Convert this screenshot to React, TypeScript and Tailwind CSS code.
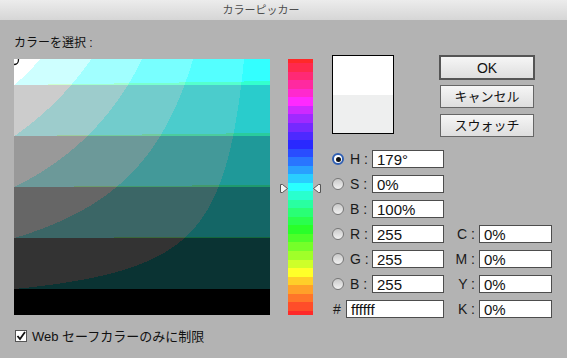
import React, { useMemo } from "react";

const q = (v: number) => Math.round(v / 51) * 51;
const adj = (r: number, g: number, b: number, k = 0.2) => {
  const m = Math.max(r, g, b);
  const f = (c: number) => Math.round(c + k * (m - c) * (1 - c / 255));
  return `rgb(${f(r)},${f(g)},${f(b)})`;
};

function hsv(h: number, s: number, v: number): [number, number, number] {
  const hh = (((h % 360) + 360) % 360) / 60;
  const i = Math.floor(hh);
  const f = hh - i;
  const p = v * (1 - s);
  const qq = v * (1 - s * f);
  const t = v * (1 - s * (1 - f));
  let r = 0, g = 0, b = 0;
  switch (i) {
    case 0: r = v; g = t; b = p; break;
    case 1: r = qq; g = v; b = p; break;
    case 2: r = p; g = v; b = t; break;
    case 3: r = p; g = qq; b = v; break;
    case 4: r = t; g = p; b = v; break;
    default: r = v; g = p; b = qq; break;
  }
  return [r * 255, g * 255, b * 255];
}

function ColorField() {
  const rects = useMemo(() => {
    const out: React.ReactElement[] = [];
    for (let y = 0; y < 256; y++) {
      const V = 1 - y / 255;
      let start = 0;
      let prev = "";
      for (let x = 0; x <= 256; x++) {
        let col = "";
        if (x < 256) {
          const S = x / 255;
          const [r, g, b] = hsv(179, S, V);
          col = adj(q(r), q(g), q(b));
        }
        if (col !== prev) {
          if (prev) out.push(<rect key={`${y}-${start}`} x={start} y={y} width={x - start} height={1} fill={prev} />);
          start = x;
          prev = col;
        }
      }
    }
    return out;
  }, []);
  return (
    <svg width="256" height="256" viewBox="0 0 256 256" shapeRendering="crispEdges" className="block">
      {rects}
      <circle cx="0" cy="1" r="4.5" fill="none" stroke="#111" strokeWidth="1.3" shapeRendering="auto" />
    </svg>
  );
}

function HueSlider() {
  const rects = useMemo(() => {
    const out: React.ReactElement[] = [];
    let start = 0;
    let prev = "";
    for (let y = 0; y <= 256; y++) {
      let col = "";
      if (y < 256) {
        const hue = 360 * (1 - (y + 0.5) / 256);
        const [r, g, b] = hsv(hue, 1, 1);
        col = adj(q(r), q(g), q(b), 0.16);
      }
      if (col !== prev) {
        if (prev) out.push(<rect key={start} x={0} y={start} width={25} height={y - start} fill={prev} />);
        start = y;
        prev = col;
      }
    }
    return out;
  }, []);
  return (
    <svg width="25" height="256" viewBox="0 0 25 256" shapeRendering="crispEdges" className="block">
      {rects}
    </svg>
  );
}

function Radio({ on }: { on?: boolean }) {
  if (on)
    return (
      <div className="w-[12px] h-[12px] rounded-full border-[2px] border-[#2f5fb3] bg-white flex items-center justify-center shrink-0">
        <div className="w-[5px] h-[5px] rounded-full bg-[#111]" />
      </div>
    );
  return <div className="w-[12px] h-[12px] rounded-full border border-[#777] bg-gradient-to-b from-[#c9c9c9] to-[#f2f2f2] shrink-0" />;
}

function Field({ value, w = "w-[72px]" }: { value: string; w?: string }) {
  return (
    <div className={`${w} h-[18px] bg-white border border-[#4d4d4d] pl-[4px] flex items-center text-[15px] leading-none text-[#111]`}>
      {value}
    </div>
  );
}

function LeftRow({ label, value, on }: { label: string; value: string; on?: boolean }) {
  return (
    <div className="flex items-center h-[18px]">
      <Radio on={on} />
      <div className="w-[28px] pl-[6px] text-[14px] leading-none text-[#1a1a1a]">{label} :</div>
      <Field value={value} />
    </div>
  );
}

function Row({ label, value, on, right }: { label: string; value: string; on?: boolean; right?: [string, string] }) {
  return (
    <div className="flex items-center h-[18px]">
      <LeftRow label={label} value={value} on={on} />
      {right && (
        <>
          <div className="w-[35px] pr-[4px] text-right text-[14px] leading-none text-[#1a1a1a]">{right[0]} :</div>
          <Field value={right[1]} w="w-[73px]" />
        </>
      )}
    </div>
  );
}

function Button({ children }: { children: React.ReactNode }) {
  return (
    <div className="w-[94px] h-[23px] border border-[#666] bg-gradient-to-b from-[#f6f6f6] to-[#dedede] flex items-center justify-center text-[13px] text-[#111] leading-none">
      {children}
    </div>
  );
}

export default function App() {
  return (
    <div className="w-[567px] h-[358px] bg-[#b3b3b3] flex flex-col overflow-hidden font-['Liberation_Sans','Noto_Sans_CJK_JP',sans-serif]">
      <div className="h-[20px] shrink-0 bg-gradient-to-b from-[#ececec] to-[#d6d6d6] flex items-center justify-center pr-[45px] text-[11px] text-[#4d4d4d]">
        カラーピッカー
      </div>
      <div className="pl-[14px] pt-[15px] h-[16px] box-content text-[12px] leading-[16px] text-[#111]">カラーを選択 :</div>
      <div className="flex items-start pl-[14px] mt-[4px]">
        <div className="mt-[4px] border-0">
          <ColorField />
        </div>
        <div className="relative mt-[4px] ml-[10px] w-[40px] pl-[8px]">
          <HueSlider />
          <svg className="absolute left-0 top-[125px]" width="8" height="9" viewBox="0 0 8 9">
            <path d="M0.5 0.5 H2.5 L7.5 4.5 L2.5 8.5 H0.5 Z" fill="#f5f5f5" stroke="#555" strokeWidth="1" />
          </svg>
          <svg className="absolute left-[33px] top-[125px]" width="8" height="9" viewBox="0 0 8 9">
            <path d="M7.5 0.5 H5.5 L0.5 4.5 L5.5 8.5 H7.5 Z" fill="#f5f5f5" stroke="#555" strokeWidth="1" />
          </svg>
        </div>
        <div className="ml-[12px] flex flex-col">
          <div className="flex items-start h-[82px]">
            <div className="w-[62px] h-[79px] border border-black flex flex-col">
              <div className="h-[39px] bg-white" />
              <div className="flex-1 bg-[#eeefef]" />
            </div>
            <div className="ml-[45px] flex flex-col">
              <div className="w-[96px] h-[25px] border-[2px] border-[#555] bg-gradient-to-b from-[#f6f6f6] to-[#dedede] flex items-center justify-center text-[14px] text-[#111] leading-none">
                OK
              </div>
              <div className="mt-[5px] ml-[1px]">
                <Button>キャンセル</Button>
              </div>
              <div className="mt-[6px] ml-[1px]">
                <Button>スウォッチ</Button>
              </div>
            </div>
          </div>
          <div className="mt-[13px] flex flex-col gap-[7px]">
            <Row label="H" value="179°" on />
            <Row label="S" value="0%" />
            <Row label="B" value="100%" />
            <Row label="R" value="255" right={["C", "0%"]} />
            <Row label="G" value="255" right={["M", "0%"]} />
            <Row label="B" value="255" right={["Y", "0%"]} />
            <div className="flex items-center h-[18px]">
              <div className="w-[14px] pl-[1px] text-[14px] leading-none text-[#1a1a1a]">#</div>
              <Field value="ffffff" w="w-[98px]" />
              <div className="w-[35px] pr-[4px] text-right text-[14px] leading-none text-[#1a1a1a]">K :</div>
              <Field value="0%" w="w-[73px]" />
            </div>
          </div>
        </div>
      </div>
      <div className="flex items-center pl-[15px] mt-[10px] h-[16px]">
        <div className="w-[12px] h-[12px] border border-[#555] bg-white flex items-center justify-center">
          <svg width="10" height="10" viewBox="0 0 10 10">
            <path d="M1.5 5 L4 8 L9 1" fill="none" stroke="#111" strokeWidth="1.8" />
          </svg>
        </div>
        <div className="ml-[5px] text-[13px] leading-none text-[#111]">Web セーフカラーのみに制限</div>
      </div>
    </div>
  );
}
